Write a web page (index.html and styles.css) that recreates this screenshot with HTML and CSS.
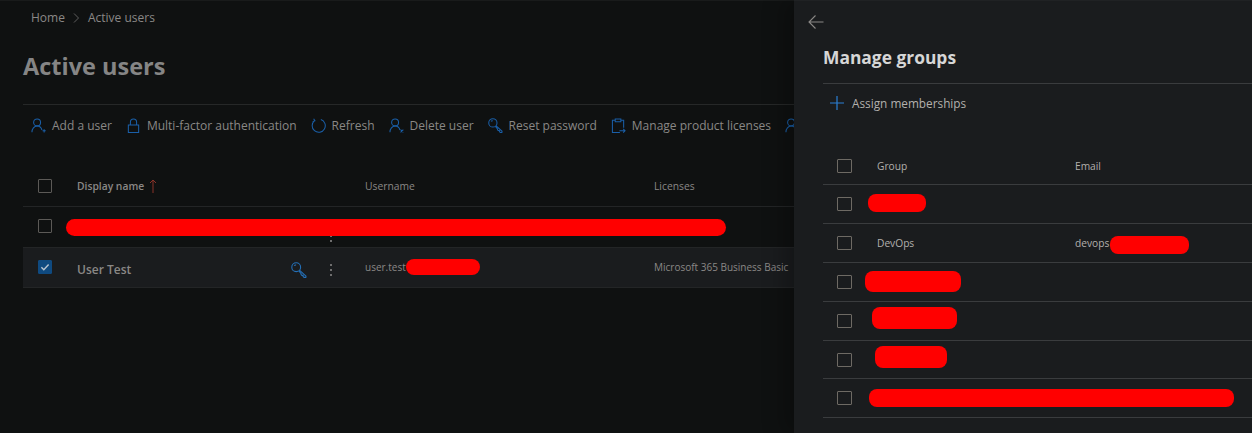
FILE: index.html
```html
<!DOCTYPE html>
<html lang="en">

<head>
    <meta charset="UTF-8">
    <meta name="viewport" content="width=device-width, initial-scale=1.0">
    <title>Active users</title>
    <link rel="stylesheet" href="styles.css">
</head>

<body>
    <svg class="defs" width="0" height="0">
        <symbol id="i-person" viewBox="0 0 16 16">
            <circle cx="6.500" cy="4.700" r="3.700" />
            <path d="M1 15.200c0-3.800 2.400-6.600 5.500-6.600 2.700 0 4.500 1.700 5.200 4.200" />
        </symbol>
        <symbol id="i-key" viewBox="0 0 16 16">
            <circle cx="5.200" cy="5.200" r="4.400" />
            <path d="M3.200 3.600c.5-.6 1.200-.7 1.900-.5M8.400 8.200l6.600 6-.2 1.200h-1.700l-1-1v-1h-1.200l-.8-.8v-1L7.900 9" />
        </symbol>
    </svg>

    <main class="page">
        <nav class="breadcrumb">
            <span>Home</span>
            <svg class="sep" viewBox="0 0 6 10"><path d="m1 .5 4.500 4.500L1 9.500" /></svg>
            <span>Active users</span>
        </nav>
        <h1>Active users</h1>

        <div class="commands">
            <div class="cmd">
                <svg class="icon" viewBox="0 0 16 16"><use href="#i-person" /><path d="M12.300 13.700h3.400M14 12v3.400" /></svg>
                Add a user
            </div>
            <div class="cmd">
                <svg class="icon" viewBox="0 0 16 16"><path d="M2.500 7.500h11v8h-11zM4.700 7.500V4.300a3.300 3.300 0 0 1 6.600 0v3.200" /></svg>
                Multi-factor authentication
            </div>
            <div class="cmd">
                <svg class="icon" viewBox="0 0 16 16"><path d="M10.500 1.600a7 7 0 1 1-6.700 1.200M2.800 .8l1.400 2.200-2.400 1" /></svg>
                Refresh
            </div>
            <div class="cmd">
                <svg class="icon" viewBox="0 0 16 16"><use href="#i-person" /><path d="m12.300 12.300 3 3M15.300 12.300l-3 3" /></svg>
                Delete user
            </div>
            <div class="cmd">
                <svg class="icon" viewBox="0 0 16 16"><use href="#i-key" /></svg>
                Reset password
            </div>
            <div class="cmd">
                <svg class="icon" viewBox="0 0 16 16"><path d="M4.500 2.500h-3v13h8M10.500 2.500h3v8M4.500 1h6v3h-6zM9 13.500h6M13 11.500l2 2-2 2" /></svg>
                Manage product licenses
            </div>
            <div class="cmd">
                <svg class="icon" viewBox="0 0 16 16"><use href="#i-person" /></svg>
            </div>
        </div>

        <div class="users">
            <div class="user-row user-head">
                <span class="box"></span>
                <span class="col-name">Display name
                    <svg class="sort" viewBox="0 0 8 14"><path d="M4 14V1M1 4l3-3 3 3" /></svg>
                </span>
                <span class="col-user">Username</span>
                <span>Licenses</span>
            </div>
            <div class="user-row">
                <span class="box box-up"></span>
                <span class="dots dots-low"></span>
                <span class="redact redact-wide"></span>
            </div>
            <div class="user-row selected">
                <span class="box box-up checked">
                    <svg viewBox="0 0 10 10"><path d="m2 5.200 2 2 4-4.200" /></svg>
                </span>
                <span class="col-name user-test">User Test</span>
                <svg class="icon row-key" viewBox="0 0 16 16"><use href="#i-key" /></svg>
                <span class="dots"></span>
                <span class="col-user cell-up">user.test<span class="redact redact-mail"></span></span>
                <span class="cell-up">Microsoft 365 Business Basic</span>
            </div>
        </div>
    </main>

    <aside class="panel">
        <svg class="back" viewBox="0 0 16 16"><path d="M15.500 8H1M7.500 1.500 1 8l6.500 6.500" /></svg>
        <h2>Manage groups</h2>
        <div class="assign">
            <svg class="plus" viewBox="0 0 14 14"><path d="M7 0v14M0 7h14" /></svg>
            Assign memberships
        </div>
        <div class="groups">
            <div class="group-row group-head"><span class="box"></span><span class="col-group">Group</span><span>Email</span></div>
            <div class="group-row"><span class="box"></span><span class="redact g1"></span></div>
            <div class="group-row"><span class="box"></span><span class="col-group">DevOps</span><span>devops</span><span class="redact g2"></span></div>
            <div class="group-row"><span class="box"></span><span class="redact g3"></span></div>
            <div class="group-row"><span class="box"></span><span class="redact g4"></span></div>
            <div class="group-row short"><span class="box"></span><span class="redact g5"></span></div>
            <div class="group-row"><span class="box"></span><span class="redact g6"></span></div>
        </div>
    </aside>
</body>

</html>
```

FILE: styles.css
```css
body {
    font-family: 'Open Sans', 'Noto Sans', sans-serif;
    background-color: #0f1111;
    margin: 0;
    height: 433px;
    overflow: hidden;
    display: flex;
    color: #8a8886;
    font-size: 12px;
}

.defs {
    position: absolute;
}

.page {
    width: 794px;
    flex: none;
    overflow: hidden;
    padding: 10px 0 0 23px;
    box-sizing: border-box;
    border-top: 1px solid #191b1b;
}

.breadcrumb {
    display: flex;
    align-items: center;
    gap: 8.500px;
    padding-left: 8px;
    font-size: 12px;
    line-height: 14px;
}

.sep {
    width: 6px;
    height: 10px;
    fill: none;
    stroke: #5f5f5f;
}

h1 {
    margin: 26px 0 0;
    font-size: 23.500px;
    line-height: 30px;
    font-weight: 700;
    color: #858585;
}

.commands {
    margin-top: 23px;
    border-top: 1px solid #262828;
    height: 41px;
    padding-left: 8px;
    display: flex;
    align-items: center;
    gap: 14px;
    white-space: nowrap;
    font-size: 12px;
}

.cmd {
    display: flex;
    align-items: center;
    gap: 6px;
}

.icon {
    width: 15px;
    height: 15px;
    fill: none;
    stroke: #1a5fa8;
    stroke-width: 1.100;
    flex: none;
}

.users {
    margin-top: 19px;
}

.user-row {
    position: relative;
    height: 40px;
    display: flex;
    align-items: center;
    border-bottom: 1px solid #232526;
    padding-left: 15px;
}

.user-head {
    height: 41px;
    font-size: 10.300px;
}

.box {
    width: 14px;
    height: 14px;
    flex: none;
    box-sizing: border-box;
    border: 1px solid #5c5a57;
    border-radius: 1px;
}

.box-up {
    margin-top: -2px;
}

.checked {
    background: #0f4a80;
    border-color: #0f4a80;
    display: flex;
}

.checked svg {
    fill: none;
    stroke: #b8c4d0;
    stroke-width: 1.200;
}

.col-name {
    margin-left: 25px;
    width: 288px;
    flex: none;
    display: flex;
    align-items: center;
    gap: 5px;
}

.user-head .col-name {
    font-weight: 600;
}

.sort {
    width: 8px;
    height: 14px;
    fill: none;
    stroke: #8a3228;
}

.col-user {
    width: 289px;
    flex: none;
}

.selected {
    height: 39px;
    background-color: #1a1c1e;
}

.user-test {
    font-size: 12px;
    font-weight: 600;
    width: 214px;
    padding-top: 4px;
}

.row-key {
    width: 16px;
    height: 16px;
    margin: 4px 23px 0 0;
    stroke: #2470b8;
}

.dots {
    width: 2px;
    height: 2px;
    background: #6e6e6e;
    box-shadow: 0 -5px #6e6e6e, 0 5px #6e6e6e;
    margin: 5px 33px 0 0;
    flex: none;
}

.dots-low {
    position: absolute;
    left: 307px;
    top: 23px;
}

.cell-up {
    font-size: 10px;
    margin-top: -2px;
}

.selected .col-user {
    display: flex;
    align-items: center;
}

.redact {
    display: block;
    background: #ff0000;
    flex: none;
    border-radius: 8px;
}

.redact-wide {
    position: absolute;
    left: 43px;
    top: 12px;
    width: 660px;
    height: 17px;
    border-radius: 9px;
}

.redact-mail {
    width: 74px;
    height: 16px;
}

.panel {
    flex: 1;
    background-color: #1a1c1e;
    box-shadow: -10px 0 20px rgba(0, 0, 0, 0.25);
    padding: 13px 0 0 29px;
    color: #b3b0ad;
    border-top: 1px solid #202224;
    position: relative;
}

.back {
    display: block;
    width: 16px;
    height: 16px;
    margin-left: -15px;
    fill: none;
    stroke: #8a8886;
    stroke-width: 1.100;
}

h2 {
    margin: 15px 0 0;
    font-size: 17.400px;
    line-height: 24px;
    font-weight: 700;
    color: #d6d6d6;
}

.assign {
    margin-top: 14px;
    border-top: 1px solid #3a3c3e;
    height: 37px;
    padding: 0 0 2px 7px;
    display: flex;
    align-items: center;
    gap: 8px;
    font-size: 11.800px;
}

.plus {
    width: 14px;
    height: 14px;
    fill: none;
    stroke: #2a7fd4;
    stroke-width: 1.200;
}

.groups {
    margin-top: 27px;
}

.group-row {
    height: 38px;
    display: flex;
    align-items: center;
    border-bottom: 1px solid #3a3c3e;
    padding-left: 14px;
    font-size: 10.200px;
    white-space: nowrap;
}

.group-head {
    height: 32px;
    padding-bottom: 2px;
}

.short {
    height: 37px;
}

.group-row .box {
    width: 15px;
    height: 14px;
    border-color: #6e6a64;
}

.col-group {
    margin-left: 25px;
    width: 198px;
    flex: none;
}

.g1 { width: 58px; height: 18px; margin: -2px 0 0 16px; }
.g2 { width: 79px; height: 18px; margin: 4px 0 0 1px; }
.g3 { width: 96px; height: 21px; margin: -1px 0 0 13px; }
.g4 { width: 85px; height: 22px; margin: -6px 0 0 20px; }
.g5 { width: 72px; height: 22px; margin: -5px 0 0 23px; }
.g6 { width: 365px; height: 18px; margin: -1px 0 0 17px; }
```
